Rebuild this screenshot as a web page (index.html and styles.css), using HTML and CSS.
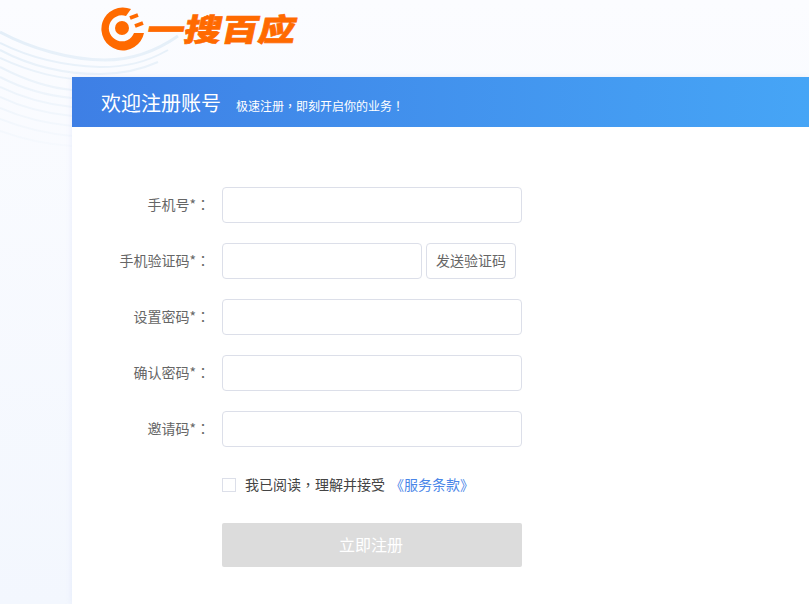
FILE: index.html
```html
<!DOCTYPE html>
<html lang="zh-CN">
<head>
    <meta charset="UTF-8">
    <meta name="viewport" content="width=device-width, initial-scale=1.0">
    <title>欢迎注册账号</title>
    <link rel="stylesheet" href="styles.css">
</head>
<body>
    <svg class="waves" width="190" height="180" viewBox="0 0 190 180" fill="none">
        <defs>
            <linearGradient id="fade" gradientUnits="userSpaceOnUse" x1="0" y1="30" x2="0" y2="165">
                <stop offset="0" stop-color="#e3eef8"/>
                <stop offset="1" stop-color="#e3eef8" stop-opacity="0"/>
            </linearGradient>
        </defs>
        <g stroke="url(#fade)" stroke-width="2">
            <path d="M0 32 C30 48 70 60 105 60 C130 60 155 52 178 36" stroke-width="3"/>
            <path d="M0 43 C30 58 65 66 100 67 C125 67 145 63 168 50"/>
            <path d="M0 50 C30 66 65 74 100 74 C120 74 140 70 158 62"/>
            <path d="M0 58 C30 72 60 80 100 81"/>
            <path d="M0 67 C25 80 50 88 72 90"/>
            <path d="M0 77 C25 90 50 96 72 98"/>
            <path d="M0 87 C25 99 50 105 72 107"/>
            <path d="M0 97 C25 109 50 114 72 116"/>
            <path d="M0 108 C25 119 50 124 72 126"/>
            <path d="M0 119 C25 129 50 134 72 136"/>
            <path d="M0 131 C25 140 50 145 72 146"/>
        </g>
    </svg>

    <header class="top">
        <div class="logo">
            <svg class="logo-mark" width="46" height="46" viewBox="0 0 46 46" fill="#ff6a00">
                <path d="M30 4 A21.5 21.5 0 1 0 43 28 L33 28 A13 13 0 1 1 25 11 Z"/>
                <circle cx="21" cy="23" r="7"/>
                <path d="M29 13 L37 10 M34 21 L42 18" stroke="#ff6a00" stroke-width="4" fill="none"/>
            </svg>
            <span class="logo-text">一搜百应</span>
        </div>
    </header>

    <main class="panel">
        <div class="banner">
            <h1>欢迎注册账号</h1>
            <p>极速注册<span class="pt" lang="zh-TW">，</span>即刻开启你的业务<span class="pt" lang="zh-TW">！</span></p>
        </div>

        <form class="form">
            <div class="form-group">
                <label for="phone">手机号*<span class="pt" lang="zh-TW">：</span></label>
                <input type="text" id="phone">
            </div>
            <div class="form-group">
                <label for="code">手机验证码*<span class="pt" lang="zh-TW">：</span></label>
                <input type="text" id="code" class="short">
                <button type="button" class="send">发送验证码</button>
            </div>
            <div class="form-group">
                <label for="pwd">设置密码*<span class="pt" lang="zh-TW">：</span></label>
                <input type="password" id="pwd">
            </div>
            <div class="form-group">
                <label for="pwd2">确认密码*<span class="pt" lang="zh-TW">：</span></label>
                <input type="password" id="pwd2">
            </div>
            <div class="form-group">
                <label for="invite">邀请码*<span class="pt" lang="zh-TW">：</span></label>
                <input type="text" id="invite">
            </div>
            <div class="agree">
                <span class="check"></span>
                <span class="agree-text">我已阅读<span class="pt" lang="zh-TW">，</span>理解并接受</span>
                <a href="#">《服务条款》</a>
            </div>
            <button type="button" class="submit">立即注册</button>
        </form>
    </main>
</body>
</html>
```

FILE: styles.css
```css
* {
    box-sizing: border-box;
}
html, body {
    height: 100%;
}
body {
    margin: 0;
    background: linear-gradient(180deg, #fbfcff, #f3f7fe);
    font-family: "Noto Sans CJK SC", "Liberation Sans", sans-serif;
    font-size: 14px;
    color: #666;
    overflow: hidden;
}
/* centred punctuation, as in the original */
.pt {
    font-family: "Noto Sans CJK TC", sans-serif;
}
.waves {
    position: absolute;
    left: 0;
    top: 0;
}
.top {
    position: relative;
    height: 77px;
    padding: 5px 0 0 101px;
}
.logo {
    display: flex;
    align-items: flex-start;
}
.logo-mark {
    flex: none;
}
.logo-text {
    margin: -2px 0 0 1px;
    font-size: 31px;
    line-height: 50px;
    font-weight: 900;
    color: #ff6a00;
    -webkit-text-stroke: .6px #ff6a00;
    transform: skewX(-12deg) scaleX(1.2);
    transform-origin: left center;
}
.panel {
    position: relative;
    margin-left: 72px;
    height: 527px;
    background-color: #fff;
    box-shadow: 0 0 6px rgba(200, 212, 240, .35);
}
.banner {
    display: flex;
    align-items: baseline;
    height: 50px;
    padding-left: 29px;
    background: linear-gradient(90deg, #3e7fe5, #46a5f6);
    color: #fff;
}
.banner h1 {
    margin: 0;
    font-size: 20px;
    font-weight: 400;
    line-height: 52px;
}
.banner p {
    margin: 0 0 0 15px;
    font-size: 12px;
}
.form {
    padding-top: 60px;
}
.form-group {
    display: flex;
    align-items: center;
    height: 36px;
    margin-bottom: 20px;
}
label {
    width: 150px;
    padding: 0 12px 2px 0;
    text-align: right;
    line-height: 34px;
}
input {
    width: 300px;
    height: 36px;
    border: 1px solid #dcdfe9;
    border-radius: 4px;
    background: #fff;
}
input.short {
    width: 200px;
}
.send {
    width: 90px;
    height: 36px;
    margin-left: 4px;
    padding: 0 0 2px;
    border: 1px solid #dcdfe9;
    border-radius: 4px;
    background: #fff;
    color: #666;
    font: inherit;
}
.agree {
    display: flex;
    align-items: center;
    height: 20px;
    margin: 28px 0 28px 150px;
    color: #444;
}
.agree-text, .agree a {
    padding-bottom: 2px;
}
.check {
    width: 14px;
    height: 14px;
    margin-right: 9px;
    border: 1px solid #dcdfe9;
}
.agree a {
    margin-left: 5px;
    color: #4a86e8;
    text-decoration: none;
}
.submit {
    display: block;
    width: 300px;
    height: 44px;
    margin-left: 150px;
    padding: 0 2px 2px 0;
    border: none;
    border-radius: 2px;
    background-color: #dcdcdc;
    color: #fff;
    font: inherit;
    font-size: 16px;
}
```
